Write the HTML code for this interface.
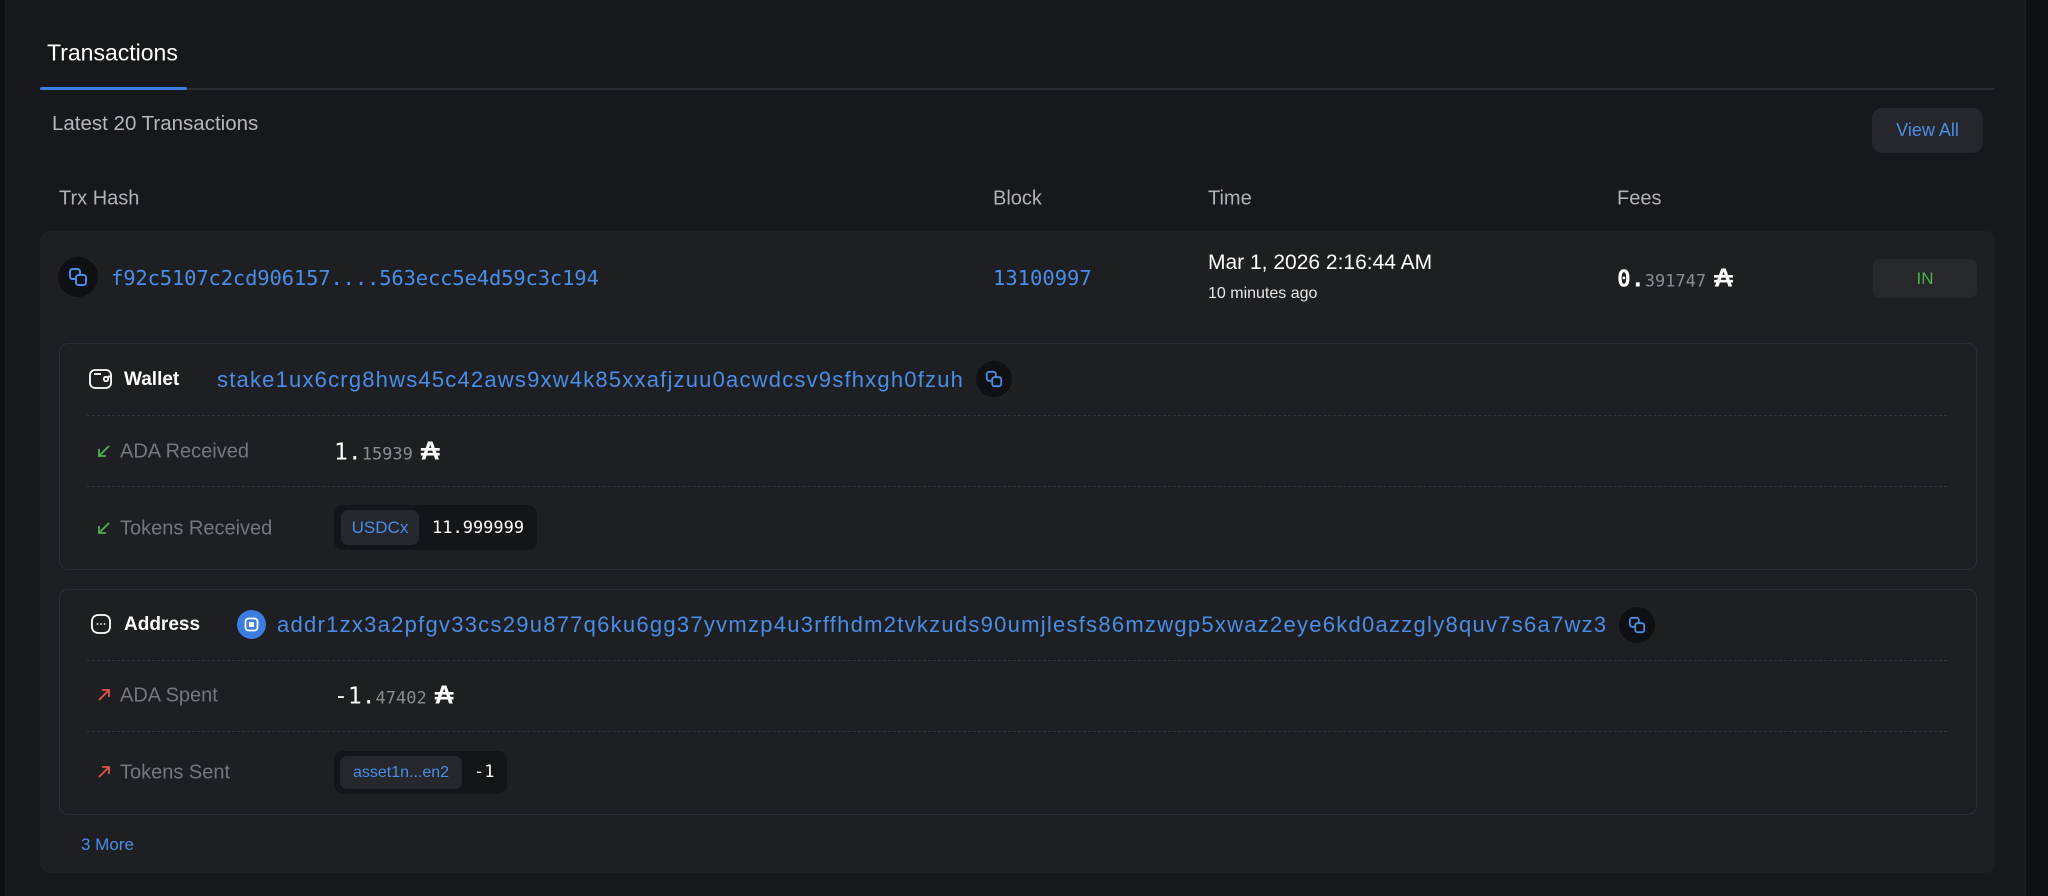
<!DOCTYPE html>
<html><head><meta charset="utf-8"><style>
*{margin:0;padding:0;box-sizing:border-box}
html,body{width:2048px;height:896px;overflow:hidden}
body{background:#0f1013;font-family:"Liberation Sans",sans-serif;color:#fff}
#w{position:relative;width:2048px;height:896px;overflow:hidden}
.a{position:absolute;white-space:nowrap}
.card{position:absolute;left:5px;top:-20px;width:2021px;height:960px;background:#17181c;border-radius:18px;border:1px solid #1d1e22}
.row{position:absolute;left:40px;top:231px;width:1955px;height:642px;background:#1e1f23;border-radius:10px}
.box{position:absolute;left:59px;width:1918px;border:1px solid #2c2e33;border-radius:9px}
.dash{position:absolute;left:87px;width:1860px;border-top:1px dashed #34363b}
.blue{color:#4a8de6}
.mono{font-family:"DejaVu Sans Mono","Liberation Mono",monospace}
.grey{color:#7b7d82}
.copy{position:absolute;width:36px;height:36px;border-radius:50%;background:#0f1013;display:flex;align-items:center;justify-content:center}
.lab{font-size:20px;color:#75777c;transform:translateY(-50%)}
.c{transform:translateY(-50%)}
.ada{font-size:26px;font-weight:bold;margin-left:8px}
</style></head><body><div id="w">
<div class="card"></div>
<div class="a" style="left:47px;top:53px;font-size:23px;color:#fff;transform:translateY(-50%)">Transactions</div>
<div class="a" style="left:40px;top:88px;width:1955px;height:2px;background:#2a2c31"></div>
<div class="a" style="left:40px;top:87px;width:147px;height:3px;background:#3b7de0;border-radius:2px"></div>
<div class="a c" style="left:52px;top:124px;font-size:20.5px;color:#b5b7bb">Latest 20 Transactions</div>
<div class="a" style="left:1872px;top:108px;width:111px;height:45px;background:#25272d;border-radius:10px;display:flex;align-items:center;justify-content:center;font-size:18px;color:#4a8de6">View All</div>
<div class="a c" style="left:59px;top:199px;font-size:20px;color:#b0b2b6">Trx Hash</div>
<div class="a c" style="left:993px;top:199px;font-size:20px;color:#b0b2b6">Block</div>
<div class="a c" style="left:1208px;top:199px;font-size:20px;color:#b0b2b6">Time</div>
<div class="a c" style="left:1617px;top:199px;font-size:20px;color:#b0b2b6">Fees</div>
<div class="row"></div>
<div class="copy" style="left:58px;top:257px;width:40px;height:40px"><svg width="20" height="20" viewBox="0 0 20 20" fill="none" stroke="#4a8de6" stroke-width="2"><rect x="2" y="2" width="10" height="10" rx="2.5"/><rect x="8" y="8" width="10" height="10" rx="2.5" fill="#0f1013"/></svg></div>
<div class="a c mono blue" style="left:111px;top:278px;font-size:20.5px;letter-spacing:-0.15px">f92c5107c2cd906157....563ecc5e4d59c3c194</div>
<div class="a c mono blue" style="left:993px;top:278px;font-size:20.5px">13100997</div>
<div class="a c" style="left:1208px;top:263px;font-size:21px;color:#fff">Mar 1, 2026 2:16:44 AM</div>
<div class="a c" style="left:1208px;top:294px;font-size:16px;color:#e8e8ea">10 minutes ago</div>
<div class="a c" style="left:1617px;top:278px"><span class="mono" style="font-size:23px;font-weight:bold">0.</span><span class="mono grey" style="font-size:17px;color:#8a8c90">391747</span><span class="ada">₳</span></div>
<div class="a" style="left:1873px;top:259px;width:104px;height:39px;background:#26282c;border-radius:7px;display:flex;align-items:center;justify-content:center;font-size:17px;color:#4caf50">IN</div>

<div class="box" style="top:343px;height:227px"></div>
<svg class="a" style="left:89px;top:369px" width="24" height="20" viewBox="0 0 24 20" fill="none" stroke="#fff" stroke-width="1.8"><rect x="1" y="1" width="21" height="18" rx="5"/><path d="M5 5h7"/><circle cx="17" cy="10" r="2.2"/><path d="M22 7.5h-3"/></svg>
<div class="a c" style="left:124px;top:380px;font-size:19px;font-weight:bold">Wallet</div>
<div class="a c blue" style="left:217px;top:380px;font-size:22px;letter-spacing:1.2px">stake1ux6crg8hws45c42aws9xw4k85xxafjzuu0acwdcsv9sfhxgh0fzuh</div>
<div class="copy" style="left:976px;top:361px"><svg width="18" height="18" viewBox="0 0 20 20" fill="none" stroke="#4a8de6" stroke-width="2"><rect x="2" y="2" width="10" height="10" rx="2.5"/><rect x="8" y="8" width="10" height="10" rx="2.5" fill="#0f1013"/></svg></div>
<div class="dash" style="top:415px"></div>
<svg class="a" style="left:97px;top:444px" width="14" height="14" viewBox="0 0 14 14" fill="none" stroke="#4caf50" stroke-width="1.8"><path d="M12 2L2 12M2 5v7h7"/></svg>
<div class="a lab" style="left:120px;top:452px">ADA Received</div>
<div class="a c" style="left:334px;top:451px"><span class="mono" style="font-size:23px">1.</span><span class="mono" style="font-size:17px;color:#8a8c90">15939</span><span class="ada">₳</span></div>
<div class="dash" style="top:486px"></div>
<svg class="a" style="left:97px;top:521px" width="14" height="14" viewBox="0 0 14 14" fill="none" stroke="#4caf50" stroke-width="1.8"><path d="M12 2L2 12M2 5v7h7"/></svg>
<div class="a lab" style="left:120px;top:529px">Tokens Received</div>
<div class="a" style="left:334px;top:505px;width:203px;height:45px;background:#141518;border-radius:9px"></div>
<div class="a" style="left:341px;top:510px;width:78px;height:35px;background:#25272d;border-radius:7px;display:flex;align-items:center;justify-content:center;font-size:17px;color:#4a8de6">USDCx</div>
<div class="a c mono" style="left:432px;top:528px;font-size:17px">11.999999</div>

<div class="box" style="top:589px;height:226px"></div>
<svg class="a" style="left:91px;top:614px" width="20" height="20" viewBox="0 0 20 20" fill="none" stroke="#fff" stroke-width="1.8"><rect x="1" y="1" width="18" height="18" rx="6"/><circle cx="6.5" cy="10" r="0.9" fill="#fff" stroke="none"/><circle cx="10" cy="10" r="0.9" fill="#fff" stroke="none"/><circle cx="13.5" cy="10" r="0.9" fill="#fff" stroke="none"/></svg>
<div class="a c" style="left:124px;top:625px;font-size:19px;font-weight:bold">Address</div>
<svg class="a" style="left:237px;top:610px" width="29" height="29" viewBox="0 0 29 29"><circle cx="14.5" cy="14.5" r="14.5" fill="#3b7de0"/><rect x="8.5" y="8.5" width="12" height="12" rx="3" fill="none" stroke="#fff" stroke-width="1.8"/><rect x="12" y="12" width="5" height="5" fill="#fff"/></svg>
<div class="a c blue" style="left:277px;top:625px;font-size:22px;letter-spacing:1.26px">addr1zx3a2pfgv33cs29u877q6ku6gg37yvmzp4u3rffhdm2tvkzuds90umjlesfs86mzwgp5xwaz2eye6kd0azzgly8quv7s6a7wz3</div>
<div class="copy" style="left:1619px;top:607px"><svg width="18" height="18" viewBox="0 0 20 20" fill="none" stroke="#4a8de6" stroke-width="2"><rect x="2" y="2" width="10" height="10" rx="2.5"/><rect x="8" y="8" width="10" height="10" rx="2.5" fill="#0f1013"/></svg></div>
<div class="dash" style="top:660px"></div>
<svg class="a" style="left:97px;top:688px" width="14" height="14" viewBox="0 0 14 14" fill="none" stroke="#e0524a" stroke-width="1.8"><path d="M2 12L12 2M5 2h7v7"/></svg>
<div class="a lab" style="left:120px;top:696px">ADA Spent</div>
<div class="a c" style="left:334px;top:695px"><span class="mono" style="font-size:23px">-1.</span><span class="mono" style="font-size:17px;color:#8a8c90">47402</span><span class="ada">₳</span></div>
<div class="dash" style="top:731px"></div>
<svg class="a" style="left:97px;top:765px" width="14" height="14" viewBox="0 0 14 14" fill="none" stroke="#e0524a" stroke-width="1.8"><path d="M2 12L12 2M5 2h7v7"/></svg>
<div class="a lab" style="left:120px;top:773px">Tokens Sent</div>
<div class="a" style="left:334px;top:751px;width:173px;height:43px;background:#141518;border-radius:9px"></div>
<div class="a" style="left:340px;top:756px;width:122px;height:33px;background:#25272d;border-radius:7px;display:flex;align-items:center;justify-content:center;font-size:16px;color:#4a8de6">asset1n...en2</div>
<div class="a c mono" style="left:474px;top:772px;font-size:17px">-1</div>
<div class="a c blue" style="left:81px;top:845px;font-size:17px">3 More</div>
</div></body></html>
